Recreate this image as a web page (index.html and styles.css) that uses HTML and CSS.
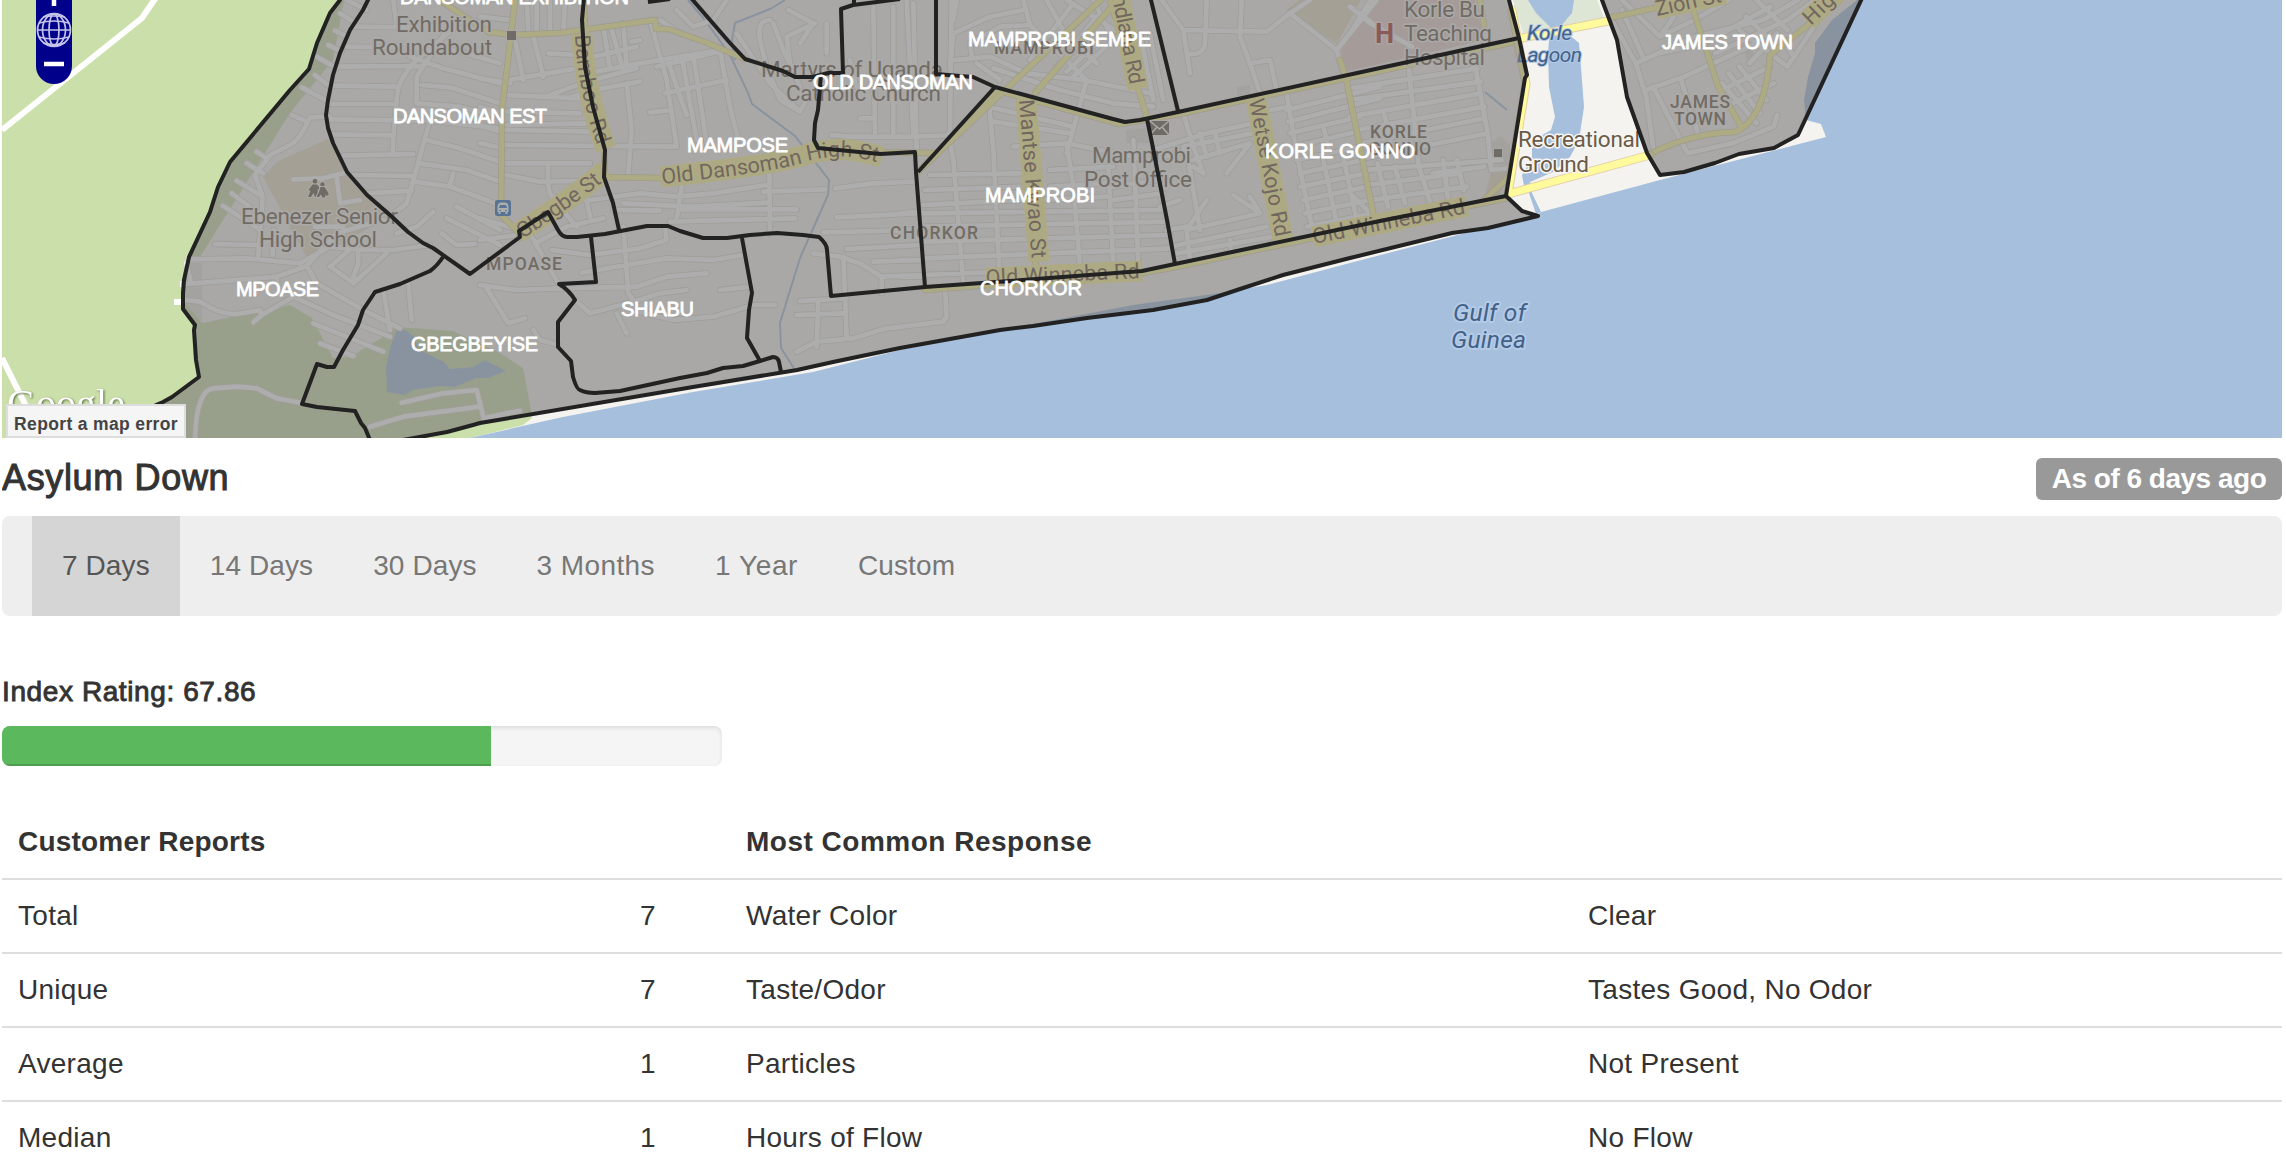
FILE: index.html
```html
<!DOCTYPE html>
<html lang="en">
<head>
<meta charset="utf-8">
<title>Asylum Down</title>
<link rel="stylesheet" href="styles.css">
</head>
<body>
<main class="page">
<section class="map">
<svg class="map-canvas" viewBox="2 0 2280 438" width="2280" height="438">
  <defs>
    <g id="west">
      <g transform="scale(.33333)">
        <path d="M1020 40L1060 65M1005 92L1040 110M985 135L1025 155M950 170L1010 205M945 225L990 260M905 262L985 305M875 345L915 362M770 455L800 475M740 490L790 520M710 542L780 585M695 580L775 640M668 617L780 690"/>
        <path d="M990 350L930 352Q900 420 870 435L810 465L765 525L788 590L785 640L775 765M820 690L818 765M645 732L770 735M565 778L740 775L900 790L990 740L1090 750L1180 750L1290 735M552 852L650 845L830 830L920 798L1010 700L1150 660M560 790L572 845M830 830L832 850"/>
        <path d="M555 900L600 905Q660 945 710 942L780 930L785 945L760 967M785 945L880 890L1000 945L1170 1010M920 798L950 850L1100 935L1200 985M940 970L1150 1055M960 1030L1060 1068M1035 518L970 535L880 538M1010 530L1020 610L1080 600M945 680L1030 680M1075 750L1075 790L1055 845L990 800L1060 740M1160 760L1060 850"/>
        <path d="M1150 870L1170 990M1225 850L1235 960M585 1314Q590 1170 640 1165L710 1160L770 1165L830 1195L910 1210M1205 1208L1330 1180L1430 1170L1450 1250M1110 1280L1210 1250L1440 1220M1450 1255L1560 1232"/>
        <path d="M1040 0L1100 30M1060 80L1240 82M1040 140L1190 142M1020 200L1220 198M1000 257L1190 260M990 312L1185 312M990 358L1290 362M1000 403L1180 406M1030 467L1240 462M1060 525L1240 528M1100 580L1235 572M1180 406L1178 465M1390 60L1250 180Q1190 240 1190 300L1180 410M1360 60L1250 230L1250 310M1290 362L1240 540L1220 610L1170 650M1220 198L1270 200"/>
        <path d="M1230 170L1330 205L1500 250M1265 255L1350 262L1500 310M1250 310L1380 320L1500 350M1290 362L1500 385M1280 420L1380 445L1500 485M1260 490L1400 510L1500 545M1245 545L1350 560L1500 615M1360 520L1350 555M1180 0L1190 80M1330 140L1500 190M1370 620L1500 690M1340 655L1500 735M1325 700L1370 735L1425 732M1300 635L1250 680L1190 700"/>
      </g>
      <g transform="translate(480) scale(.33333)">
        <path d="M140 0L145 95M170 0L170 95M210 0L210 95M255 0L250 95M0 50L90 60M105 120L130 240M160 110L190 230M85 240L290 205M0 235L90 250M205 160L290 165M205 287L320 245L470 205M262 295L340 270L480 245M80 285L300 295M80 335L300 340M80 375L320 370L350 360M0 320L65 340M0 375L60 395M0 430L70 445M80 390L330 395M80 435L590 440M80 490L330 490M80 525L180 545L300 543M205 490Q200 570 215 590L290 680"/>
        <path d="M340 170L470 140M345 215L480 190L720 150M370 80L390 205M430 70L440 200M395 90L430 210M440 250L455 390L445 520M510 60L560 240L590 440M530 200L715 155M565 185L590 260L620 345M605 170L650 420M640 165L680 430M555 280L740 240M510 337L575 330M720 150L750 320L775 420M590 30L640 80L700 60L740 0M540 60L600 100M455 125L480 120"/>
        <path d="M215 590L330 600L480 580L590 590L700 580L860 555M320 600L330 650M400 630L540 632M430 610L640 620L860 608M605 560L590 660M600 628L950 628M570 665L945 655M868 500L870 700M850 575L1035 568M1065 565L1180 550L1300 545M1070 652L1310 640M1030 697L1320 690M1100 747L1320 735M1180 785L1320 780"/>
        <path d="M0 655L120 690M0 720L150 700L240 860M165 730L260 680L370 655M215 750L330 765L480 745L560 720L555 680M305 818L440 795L560 775L700 780L790 765M250 865L470 860L560 830L680 820M0 855L110 870L240 865M20 865L85 970L135 955M160 990L180 1020L235 1035M430 680L445 880L460 900M285 900L330 940L460 905L540 880L620 870M410 940L440 1000M475 935L580 960L700 950L820 915L885 915M720 870L810 860"/>
        <path d="M1000 760L1080 770L1140 790L1205 830L1320 825M1090 770L1100 1010M1205 830L1205 880M960 903L1100 895M950 945L1090 940M1015 905L1010 1040M950 1055L1010 1025L1120 1015L1220 985L1390 965L1400 950L1395 870"/>
        <path d="M880 70L910 150L960 260M925 30L1000 70L960 130M1005 70L920 110L930 190M870 60Q830 60 840 120L860 200L900 300L960 335L985 290M960 335L870 250L770 100M1040 70L1040 160M1180 20L1185 400M1240 20L1240 400M1300 10L1310 450M1110 180L1130 260M1055 405L1110 410L1300 410L1440 405M1140 355L1180 355M1415 0L1410 400"/>
      </g>
      <g transform="translate(900) scale(.33333)">
        <path d="M150 200L160 100L270 50L370 30M215 165L210 130L300 80L390 75M170 0L160 60M370 0L390 75L560 240M440 0L500 110L590 190M165 180L270 170L380 220L550 240L750 280M230 190L300 240M500 0L660 100M560 40L500 100M580 0L640 120L520 230M280 205L480 270L640 310L760 320M600 120L500 215M560 240L500 460M720 100L760 300M750 100L790 300M520 10L390 180M590 50L470 200"/>
        <path d="M785 0L850 90L870 220M850 90L1100 95L1170 40L1230 0M920 0L915 130Q910 170 860 160M1025 0L1020 110L1050 190L1110 180L1130 270M1050 190L1080 280M1170 40L1310 150L1330 220M1310 150L1430 0M1380 40L1440 90"/>
        <path d="M265 290L280 450L300 850M145 400L160 480L190 850M265 320L520 380M280 365L510 400M20 0L40 400M340 440L500 430L750 480M90 525L360 520M450 510L640 500M75 570L360 560M70 615L360 600M65 640L790 630M70 680L800 665M70 725L810 705M70 775L820 745M75 825L640 800M0 640L60 635M0 690L60 690M0 780L70 780M0 830L70 830M500 430L520 560L540 800M625 500L640 800M700 420L715 790M430 600L620 590M450 560L620 550M640 560L780 540M640 600L790 580"/>
        <path d="M850 340L880 440L910 520M760 450L920 400L1060 370M900 400L920 470M945 400L960 460M850 440L1060 400M880 480L1050 430L980 520M760 480L860 450L900 690M910 520L880 500M920 600L860 690L1080 640L1000 585M860 690L870 780M780 620L840 600M800 690L860 680M810 740L1100 680M990 720L995 760M830 760L1120 710M1080 640L1050 590"/>
        <path d="M1160 280L1190 460L1240 700M1160 330L1440 260M1165 365L1440 295M1170 400L1380 350M1180 440L1370 395M1190 480L1380 440M1200 520L1390 480M1200 560L1400 520M1210 600L1400 560M1215 640L1410 600M1220 680L1420 640M1270 480L1310 670M1330 470L1370 660M1270 380L1290 460M1110 330L1170 320"/>
      </g>
      <g transform="translate(1350) scale(.34444 .33333)">
        <path d="M170 195L200 500L240 630M0 265L370 205M0 300L380 245M0 350L380 280M20 390L390 320M30 430L390 355M40 475L400 400M40 510L440 480M50 555L320 520M60 600L340 560M100 345L120 440M80 490L110 620M130 500L160 610M270 480L285 600M310 480L330 570M360 180L400 400L410 510L460 505M240 520L390 500M0 580L60 640M0 100L60 0M0 20L60 70L180 140"/>
        <path d="M760 60L830 190L860 290L880 440M790 30L850 170M790 0L900 110L940 50M900 110L1000 60L1100 0M830 190L1000 110L1200 60L1300 0M860 270L970 230L1180 130M880 260L980 460L1110 430L1230 380L1240 345M960 235L1010 400M900 160L1030 130L1220 20M1130 200L1210 300M1100 220L1190 340M1080 250L1180 370M1060 160L1270 60L1350 0M1130 90L1270 200L1360 60M1160 190L1240 100L1290 170M1080 270L1220 200M1110 310L1230 250M1150 50L1220 120M1180 0L1270 90"/>
      </g>
    </g>
    <g id="arterials">
      <path d="M515 0L511 35L502 110L501 215L522 236M490 32L512 35L560 33L655 20L656 29L668 29L705 42L745 59M444 3L470 20L490 33M584 0L586 67L596 120L604 150L605 177L660 178L770 163L850 152L935 153M519 238L560 200L606 177"/>
      <path d="M918 172L1105 -4M1035 93L1118 0M1110 0L1147 117M918 172L997 90M1019 100L1037 275M1250 98L1282 240M1346 78L1375 222M925 290L1142 273L1176 267L1380 224L1508 198M995 90L1120 124L1180 114L1380 71L1519 41M1480 0L1484 25M1484 200L1512 174"/>
      <path d="M1609 18L1700 -2M1690 0L1718 86L1742 128M1648 155Q1690 133 1735 132Q1765 120 1770 55L1840 0M1345 75L1340 60"/>
    </g>
    <path id="old-dansoman" d="M662 184C735 176 785 170 812 160C840 154 855 156 883 164"/>
    <path id="gbegbe" d="M522 239Q575 205 610 176"/>
    <path id="bamboo" d="M575 35Q577 90 599 150"/>
    <path id="mantse" d="M1019 100L1032 262"/>
    <path id="wetse" d="M1249 100L1276 240"/>
    <path id="mudlana" d="M1112 -3L1131 90"/>
    <path id="winneba-west" d="M986 285L1142 278"/>
    <path id="winneba-east" d="M1314 244L1468 213"/>
    <path id="zion" d="M1657 16L1726 1"/>
    <path id="high" d="M1811 26L1840 -2"/>
  </defs>

  <rect class="land" x="2" width="2280" height="438"/>
  <path class="park" d="M2 0H344L333 60L290 113L267 150L200 257L190 263L185 300L203 323L290 305L312 318L333 358L350 357L383 337L397 327L453 331L500 353L523 368L530 405L532 418L523 425L470 438H2Z"/>
  <path class="school" d="M263 177L278 161L328 139L347 172L390 215L362 232L308 260Z"/>
  <path class="school" d="M1286 10L1302 -2H1362L1337 44ZM1491 172L1512 168L1500 195L1484 200Z"/>
  <path class="hospital" d="M1341 50L1370 0H1475L1484 40L1345 72Z"/>
  <path class="lot" d="M1126 130L1150 128V143H1126ZM1237 87L1250 85V96H1237ZM1489 145L1500 136L1510 145V165H1489ZM1744 52L1752 48L1756 58L1748 62ZM190 263L202 263L202 323L185 303Z"/>
  <path class="lagoon-bank" d="M1513 0L1523 33L1604 18L1597 0Z"/>
  <path class="water" d="M470 438L527 425L563 417L693 392L813 372L900 350L1033 324L1133 305L1220 293L1267 285L1350 263L1538 214L1541 212L1660 180L1826 137L1821 124L1806 120L1804 100L1808 77L1815 53L1815 43L1832 20L1857 0H2282V438Z"/>
  <path class="water" d="M1528 0L1536 13L1550 27L1548 53L1549 87L1555 117L1551 130L1532 141L1532 158L1522 175L1524 186L1528 190L1536 214L1541 212L1532 193L1530 182L1553 172L1570 157L1579 140L1584 107L1581 67L1579 43L1560 27L1572 13L1574 0Z"/>
  <path class="water" d="M397 330H406L415 338L418 349L444 362L450 369L473 367L485 360L506 371L488 378H476L455 387L440 386L413 390L405 395L387 392L386 367L391 345Z"/>
  <path class="stream" d="M688 0L705 20L730 55L748 93L752 104L795 136L829 180L828 195L800 258L780 323L781 348L795 370M785 0L770 9L735 23L732 40L735 60M1485 92L1507 110"/>
  <path class="track" d="M2 130L142 18L157 -4M2 358L28 410M174 302H184M180 284H186"/>
  <use href="#west" class="street-case"/>
  <use href="#west" class="street"/>
  <use href="#arterials" class="road-case"/>
  <use href="#arterials" class="road"/>
  <path class="road-case wide" d="M1522 38L1608 21M1508 194L1526 84L1512 10M1508 194L1650 155"/>
  <path class="road wide" d="M1522 38L1608 21M1508 194L1526 84L1512 10M1508 194L1650 155"/>
  <g class="road-halo">
    <use href="#old-dansoman" x="-1" y="-7"/><use href="#gbegbe" x="-4" y="-6"/>
    <use href="#bamboo" x="7" y="-1"/><use href="#mantse" x="7"/><use href="#wetse" x="7" y="-1"/><use href="#mudlana" x="7" y="-1"/>
    <use href="#winneba-west" y="-7"/><use href="#winneba-east" x="-1" y="-7"/><use href="#zion" x="-1" y="-7"/><use href="#high" x="-4" y="-5"/>
  </g>
  <path class="mark" d="M507 31h9v9h-9zM1494 149h8v8h-8z"/>
  <g class="hikers">
    <circle cx="315" cy="181.500" r="2.400"/><path d="M312.500 184.500h4.500l4 5-1 1.500-2.500-2 1 8h-3.500l-1.500-4-2.500 4h-3l2.500-6-2-1z"/>
    <circle cx="322.500" cy="184.500" r="2.200"/><path d="M320.500 187h4l4 6v2l-2.500 1-.500-2-.500 3.500h-2.500l-1.500-3-2 2.500h-2.500l2.500-5z"/>
  </g>
  <g class="mail"><path class="mark" d="M1150 121h19v14h-19z"/><path d="M1150 121l9.500 8 9.500-8M1150 135l7-8M1169 135l-7-8"/></g>
  <g class="bus"><rect x="495" y="200" width="16" height="16" rx="2.500"/><path d="M497.500 212v-5.500q.500-4 3.500-4h4q3 0 3.500 4v5.500h-1v2h-2v-2h-5v2h-2v-2z"/><path class="bus-window" d="M499 208l1-3h6l1 3z"/><circle cx="500" cy="210.500" r=".8"/><circle cx="506" cy="210.500" r=".8"/></g>
  <text class="hospital-mark" x="1375" y="43" textLength="20">H</text>
  <g class="place">
    <text x="396" y="32" textLength="96">Exhibition</text><text x="372" y="55" textLength="120">Roundabout</text>
    <text x="241" y="224" textLength="157">Ebenezer Senior</text><text x="259" y="247" textLength="118">High School</text>
    <text x="761" y="77" textLength="182">Martyrs of Uganda</text><text x="786" y="101" textLength="155">Catholic Church</text>
    <text x="1092" y="163" textLength="99">Mamprobi</text><text x="1084" y="187" textLength="108">Post Office</text>
    <text x="1404" y="17" textLength="81">Korle Bu</text><text x="1404" y="41" textLength="88">Teaching</text><text x="1404" y="65" textLength="81">Hospital</text>
    <text x="1518" y="147" textLength="122">Recreational</text><text x="1518" y="172" textLength="71">Ground</text>
  </g>
  <g class="area">
    <text x="486" y="270" textLength="76">MPOASE</text><text x="890" y="239" textLength="88">CHORKOR</text><text x="994" y="54" textLength="100">MAMPROBI</text>
    <text x="1370" y="138" textLength="57">KORLE</text><text x="1369" y="155" textLength="62">GONNO</text>
    <text x="1670" y="108" textLength="60">JAMES</text><text x="1674" y="125" textLength="52">TOWN</text>
  </g>
  <g class="sea">
    <text class="small" x="1527" y="40" textLength="45">Korle</text><text class="small" x="1517" y="62" textLength="65">Lagoon</text>
    <text x="1453" y="321" textLength="73">Gulf of</text><text x="1451" y="348" textLength="75">Guinea</text>
  </g>
  <g class="road-name">
    <text textLength="218"><textPath href="#old-dansoman">Old Dansoman High St</textPath></text>
    <text textLength="98"><textPath href="#gbegbe">Gbegbe St</textPath></text>
    <text textLength="113"><textPath href="#bamboo">Bamboo Rd</textPath></text>
    <text textLength="159"><textPath href="#mantse">Mantse Kwao St</textPath></text>
    <text textLength="140"><textPath href="#wetse">Wetse Kojo Rd</textPath></text>
    <text textLength="90"><textPath href="#mudlana">ndlana Rd</textPath></text>
    <text textLength="154"><textPath href="#winneba-west">Old Winneba Rd</textPath></text>
    <text textLength="155"><textPath href="#winneba-east">Old Winneba Rd</textPath></text>
    <text textLength="67"><textPath href="#zion">Zion St</textPath></text>
    <text textLength="35"><textPath href="#high">Hig</textPath></text>
  </g>

  <path class="zone" d="M340 -6V0L330 13L317 43L309 69L290 90L230 162L218 187L210 212L189 257L184 280L183 293L183 309L195 325L194 330L196 360L199 377L172 397L163 402L156 405L120 440H403L447 432L473 425L480 423L693 387L797 370L833 362L900 348L1000 330L1033 326L1087 318L1153 310L1207 300L1240 289L1283 275L1350 258L1452 233L1488 228L1538 216L1522 211L1506 196L1525 78L1527 75L1519 38L1509 0V-6Z"/>
  <path class="zone" d="M1600 -6L1602 0L1617 40L1627 97L1647 153L1660 175L1684 172L1715 163L1739 154L1774 148L1798 135L1864 -6Z"/>
  <g class="border">
    <path d="M370 -4L363 10L350 30L340 53L333 75L328 100L326 115L328 128L333 143L347 172L367 195L390 215L408 232L423 243L433 248L470 274L520 237L519 231L548 212L558 230Q562 237 567 237H577L605 234L647 226H668L680 231L703 238H727L750 235L777 233L803 235L819 237Q827 244 827 250L831 296L925 287L1010 281L1142 271L1175 264L1380 221L1506 196"/>
    <path d="M584 -2L582 20L585 67L593 107L605 150L604 177L613 203L619 230M691 -2L730 43L745 59L783 71L795 77H813L828 73H843L841 9L853 5L900 -1M854 -2V5M648 2L670 -1M821 75L818 110L815 123L814 140L818 148L880 154L915 152L916 172L925 287"/>
    <path d="M936 -2V74L960 76L973 77L995 87L1113 119L1125 122L1140 120L1178 112L1380 68L1519 38M995 87L918 172M1150 -4L1178 111M1147 119L1152 143L1167 220L1175 264"/>
    <path d="M443 257Q437 266 430 271L400 284L375 292L363 310L358 325L343 350L334 367H327L317 364L302 404L317 407L355 411L361 423L365 428L370 440"/>
    <path d="M591 237L596 282L559 284Q569 290 575 300L558 322V347L571 361L573 377Q577 390 580 390Q586 393 595 393L620 391L680 378L707 373L723 368L743 366L760 361L747 338L749 310L752 293L742 238M760 361L773 357Q778 357 779 362L781 372"/>
  </g>
  <g class="zone-name">
    <text x="400" y="4" textLength="229">DANSOMAN EXHIBITION</text><text x="393" y="123" textLength="154">DANSOMAN EST</text>
    <text x="687" y="152" textLength="101">MAMPOSE</text><text x="813" y="89" textLength="160">OLD DANSOMAN</text>
    <text x="236" y="296" textLength="83">MPOASE</text><text x="411" y="351" textLength="127">GBEGBEYISE</text><text x="621" y="316" textLength="73">SHIABU</text>
    <text x="968" y="46" textLength="183">MAMPROBI SEMPE</text><text x="985" y="202" textLength="110">MAMPROBI</text><text x="980" y="295" textLength="102">CHORKOR</text>
    <text x="1265" y="158" textLength="150">KORLE GONNO</text><text x="1662" y="49" textLength="131">JAMES TOWN</text>
  </g>
  <text class="provider" x="7" y="417" textLength="118">Google</text>
  <g class="zoomer">
    <path class="zoomer-bg" d="M36 0H72V66a18 18 0 0 1-36 0Z"/>
    <g class="globe"><circle cx="54" cy="30" r="16.500"/><ellipse cx="54" cy="30" rx="11.500" ry="16"/><ellipse cx="54" cy="30" rx="5" ry="16"/><path d="M37.500 30H70.500M39 23Q54 19 69 23M43 17Q54 15 65 17M39 37Q54 41 69 37M43 43Q54 46 65 43"/></g>
    <path class="zoomer-sign" d="M54 0V6M44 64H64"/>
  </g>
</svg>
<a class="report">Report a map error</a>
</section>

<header class="title-row">
  <h3 class="title">Asylum Down</h3>
  <span class="badge">As of 6 days ago</span>
</header>

<nav class="tabs">
  <a class="tab active">7 Days</a><a class="tab">14 Days</a><a class="tab">30 Days</a><a class="tab months">3 Months</a><a class="tab year">1 Year</a><a class="tab">Custom</a>
</nav>

<section class="rating">
  <h4 class="rating-title">Index Rating: 67.86</h4>
  <div class="progress"><div class="progress-bar" style="width:67.86%"></div></div>
</section>

<table class="reports">
  <colgroup><col class="c1"><col class="c2"><col class="c3"><col class="c4"></colgroup>
  <tr><th class="short" colspan="2">Customer Reports</th><th colspan="2">Most Common Response</th></tr>
  <tr><td>Total</td><td>7</td><td>Water Color</td><td>Clear</td></tr>
  <tr><td>Unique</td><td>7</td><td>Taste/Odor</td><td>Tastes Good, No Odor</td></tr>
  <tr><td>Average</td><td>1</td><td>Particles</td><td>Not Present</td></tr>
  <tr><td>Median</td><td>1</td><td>Hours of Flow</td><td>No Flow</td></tr>
</table>
</main>
</body>
</html>
```
FILE: styles.css
```css
* { box-sizing: border-box; }
html { overflow: hidden; }
body { margin: 0; height: 1174px; overflow: hidden; background: #fff; color: #333; font: 28px/40px "Liberation Sans", Arial, sans-serif; }
.page { width: 2280px; height: 1174px; overflow: hidden; margin-left: 2px; }

/* Map */
.map { position: relative; height: 438px; overflow: hidden; }
.map-canvas { display: block; }
.land { fill: #f4f3ef; }
.park { fill: #cadfaa; }
.school { fill: #e9dfc4; }
.hospital { fill: #ecd4cf; }
.lot { fill: #e6e3dd; }
.lagoon-bank { fill: #dde6d5; }
.water { fill: #a5bfdd; }
.stream { fill: none; stroke: #a5bfdd; stroke-width: 2; }
.track { fill: none; stroke: #fff; stroke-width: 6; }
.street-case, .street, .road-case, .road { fill: none; stroke-linecap: round; stroke-linejoin: round; }
.street-case { stroke: #dcd7cc; stroke-width: 19; }
.street { stroke: #fff; stroke-width: 14; }
.road-case { stroke: #dccfab; stroke-width: 6.5; }
.road { stroke: #fffa98; stroke-width: 5; }
.road-case.wide { stroke: #e3cfa8; stroke-width: 9; }
.road.wide { stroke: #fffb9c; stroke-width: 7; }
.road-halo { fill: none; stroke: #fff897; stroke-width: 21; stroke-linejoin: round; }
.mark { fill: #675b4b; stroke: #f4f3ef; stroke-width: 1.5; paint-order: stroke; }
.hikers { fill: #675b4b; stroke: #f4f3ef; stroke-width: 2; paint-order: stroke; }
.mail path + path { fill: none; stroke: #f4f3ef; stroke-width: 1.5; }
.bus rect, .bus circle, .bus .bus-window { fill: #2870c0; }
.bus path { fill: #fff; }
.map text { paint-order: stroke; stroke-linejoin: round; }
.place { font: 22.5px Roboto, sans-serif; fill: #6b5b48; stroke: #f7f6f3; stroke-width: 3; }
.area { font: 500 17.5px Roboto, sans-serif; fill: #6b5b48; stroke: #f7f6f3; stroke-width: 3; }
.sea { font: italic 24.5px Roboto, sans-serif; fill: #426188; stroke: #b4cae6; stroke-width: 4; }
.small { font-size: 21px; stroke-width: 2; }
.road-name { font: 21.5px Roboto, sans-serif; fill: #6b4e3c; }
.hospital-mark { font: 700 27px Roboto, sans-serif; fill: #a8302f; stroke: #f7e8e5; stroke-width: 3; }
.zone { fill: #777; fill-opacity: .6; stroke: #222; stroke-width: 4; stroke-linejoin: round; }
.border { fill: none; stroke: #222; stroke-width: 4; stroke-linejoin: round; }
.zone-name { font: 20px "Liberation Sans", Arial, sans-serif; fill: #fff; stroke: #fff; stroke-width: .8; }
.provider { font: 40px "Liberation Serif", serif; fill: #fff; filter: drop-shadow(1px 1px 1px #5a6b40); }
.zoomer-bg { fill: #00008b; }
.globe { fill: none; stroke: #c4c4ea; stroke-width: 1.7; }
.zoomer-sign { stroke: #fff; stroke-width: 4.5; }
.report { position: absolute; left: 4px; top: 404px; width: 180px; height: 34px; border: 2px solid #ddd; background: #f5f5f5; color: #444; font: 700 17.5px/36px "Liberation Sans", Arial, sans-serif; text-align: center; letter-spacing: .35px; white-space: nowrap; }

/* Heading */
.title-row { display: flex; justify-content: space-between; align-items: flex-start; height: 78px; padding-top: 20px; }
.title { margin: 0; font-size: 36px; line-height: 40px; font-weight: 400; letter-spacing: .65px; -webkit-text-stroke: 1px #333; }
.badge { width: 246px; height: 42px; border-radius: 6px; background: #999; color: #fff; font-size: 28px; line-height: 41px; font-weight: 700; letter-spacing: -.5px; text-align: center; white-space: nowrap; }

/* Period tabs */
.tabs { display: flex; height: 100px; padding-left: 30px; border-radius: 8px; background: #eee; color: #777; line-height: 100px; }
.tab { padding: 0 30px; letter-spacing: .1px; }
.active { background: #d5d5d5; color: #555; }
.months { letter-spacing: .4px; }
.year { letter-spacing: .6px; }

/* Rating */
.rating { padding-top: 56px; }
.rating-title { margin: 0 0 14px; font-size: 28px; line-height: 40px; font-weight: 400; letter-spacing: .6px; -webkit-text-stroke: .9px #333; }
.progress { width: 720px; height: 40px; overflow: hidden; border-radius: 8px; background: #f5f5f5; box-shadow: inset 0 2px 4px rgba(0,0,0,.1); }
.progress-bar { height: 100%; background: #5cb85c; box-shadow: inset 0 -2px 0 rgba(0,0,0,.15); }

/* Reports */
.reports { width: 2280px; margin-top: 40px; border-collapse: separate; border-spacing: 0; table-layout: fixed; }
.c1 { width: 622px; }
.c2 { width: 106px; }
.c3 { width: 842px; }
.reports th, .reports td { height: 74px; padding: 16px; line-height: 40px; text-align: left; white-space: nowrap; letter-spacing: .28px; }
.reports th { height: 72px; letter-spacing: .5px; }
.reports .short { letter-spacing: .2px; }
.reports td { border-top: 2px solid #ddd; }
```
